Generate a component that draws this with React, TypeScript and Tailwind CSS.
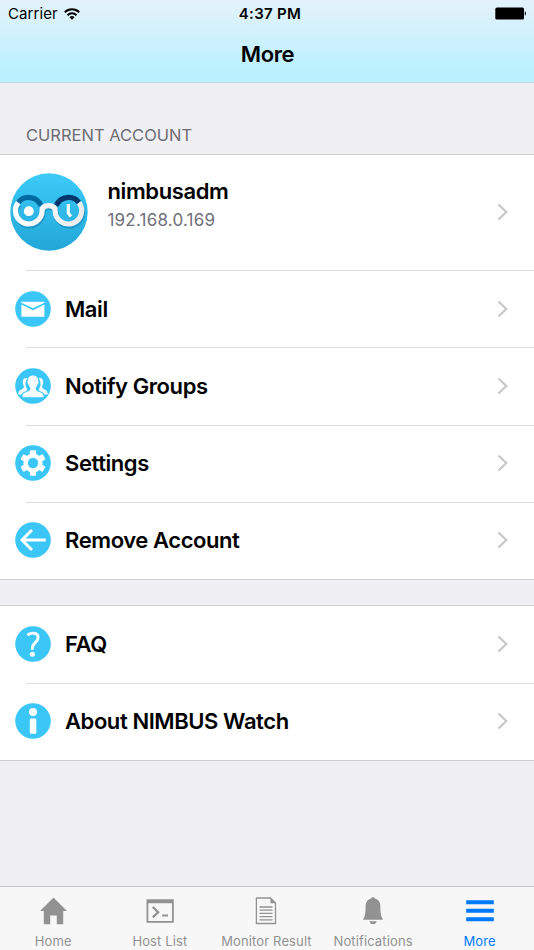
import React from "react";

const ACCENT = "#3ac7f7";

function Chevron() {
  return (
    <svg className="shrink-0" width="12" height="18" viewBox="0 0 12 18" fill="none">
      <path d="M1.5 1.5 9.3 9 1.5 16.5" stroke="#c7c7cc" strokeWidth="2.2" />
    </svg>
  );
}

function Disc({ children }: { children: React.ReactNode }) {
  return (
    <svg className="shrink-0" width="36" height="36" viewBox="0 0 36 36">
      <circle cx="18" cy="18" r="17.8" fill={ACCENT} />
      {children}
    </svg>
  );
}

function MailIcon() {
  return (
    <Disc>
      <path d="M6.4 10.8h23v1L18 17.3 6.4 11.8z" fill="#fff" />
      <path d="M6.4 13.4 18 19.3l11.4-5.9v12.3h-23z" fill="#fff" />
    </Disc>
  );
}

function GroupsIcon() {
  const side = "M12.4 10.1C9.2 9.5 7.5 11.6 7.8 14.8c.1 1.6.9 2.6 1.1 3.7.2 1.4-.8 2.1-3.1 3.3-1.7.9-2.5 2.2-2.5 4.6h3.4c.9-1.9 2.3-2.4 4.5-3.4 1.2-.6 1.4-1.3.6-2.5-1.1-1.6-1.5-3.4-1.2-5.7.2-1.8.8-3.3 1.8-4.7z";
  return (
    <Disc>
      <g fill="#f8fbfd">
        <path d={side} />
        <path d={side} transform="matrix(-1 0 0 1 36 0)" />
        <path d="M18 7.4c-3.4 0-5.2 2.2-5.1 5.5-.6.3-.6 1.1-.4 1.9.2.9.6 1.4 1.1 1.6.3 1.4.9 2.3 1.6 3v2c-.4 1.3-3 2.1-5.1 3.1-1.9.9-2.5 2.1-2.8 4.8h21.4c-.3-2.7-.9-3.9-2.8-4.8-2.1-1-4.7-1.8-5.1-3.1v-2c.7-.7 1.3-1.6 1.6-3 .5-.2.9-.7 1.1-1.6.2-.8.2-1.6-.4-1.9.1-3.3-1.7-5.5-5.1-5.5z" />
      </g>
    </Disc>
  );
}

function SettingsIcon() {
  return (
    <Disc>
      <g fill="#fff">
        {[0, 60, 120].map((deg) => (
          <rect key={deg} x="14.9" y="5.3" width="6.2" height="25.4" rx=".9" transform={`rotate(${deg} 18 18)`} />
        ))}
        <circle cx="18" cy="18" r="9.6" />
      </g>
      <circle cx="18" cy="18" r="5.2" fill={ACCENT} />
    </Disc>
  );
}

function RemoveIcon() {
  return (
    <Disc>
      <path d="M17 8 7 18l10 10M7.4 18h23.4" fill="none" stroke="#fff" strokeWidth="2.9" />
    </Disc>
  );
}

function FaqIcon() {
  return (
    <Disc>
      <path
        d="M12.5 9.1c1.5-1.3 3.2-2 5.3-2 3.4 0 5.3 1.7 5.3 4.5 0 2.4-1.5 3.8-3.1 5.3-1.7 1.6-2.7 2.8-2.7 5.5v1.3"
        fill="none"
        stroke="#fff"
        strokeWidth="2.9"
      />
      <circle cx="17.3" cy="28.3" r="2.5" fill="#fff" />
    </Disc>
  );
}

function AboutIcon() {
  return (
    <Disc>
      <circle cx="18" cy="9" r="4" fill="#fff" />
      <rect x="14.8" y="15.5" width="6.5" height="15.3" rx="1.2" fill="#fff" />
    </Disc>
  );
}

function NimbusLogo() {
  // Glasses: one lens holds a pupil, the other a clock
  const frame = "M8.2 29.6A13.3 13.3 0 1 0 32.1 38C32.1 34.2 34.5 32.6 38.6 32.6S45.1 34.2 45.1 38A13.3 13.3 0 1 0 69 29.6";
  return (
    <svg className="shrink-0" width="78" height="78" viewBox="0 0 78 78" fill="none">
      <defs>
        <linearGradient id="sky" x1="0" y1="0" x2="0" y2="1">
          <stop offset="0" stopColor="#3dcbf8" />
          <stop offset="1" stopColor="#21a7d8" />
        </linearGradient>
        <linearGradient id="rim" x1="0" y1="0" x2="1" y2="0">
          <stop offset="0" stopColor="#ffffff" />
          <stop offset="1" stopColor="#e9ebee" />
        </linearGradient>
      </defs>
      <circle cx="39" cy="39" r="38.7" fill="url(#sky)" />
      <path d={frame} stroke="#137fae" strokeOpacity=".55" strokeWidth="5.2" transform="translate(.8 2)" />
      <path d="M8.2 29.6A13.3 13.3 0 0 1 31 32.8" stroke="#0069a0" strokeWidth="5.2" />
      <path d="M46.2 32.8A13.3 13.3 0 0 1 69 29.6" stroke="#03366c" strokeWidth="5.2" />
      <path d={frame} stroke="url(#rim)" strokeWidth="5.2" />
      <circle cx="18.8" cy="38.2" r="4.9" fill="#fff" />
      <path d="M58.3 31v9l2.6 3.6" stroke="#f4fafd" strokeWidth="3.2" />
    </svg>
  );
}

function Row({ icon, label }: { icon: React.ReactNode; label: string }) {
  return (
    <div className="flex h-[77.25px] items-center pl-[14.5px]">
      {icon}
      <div className="ml-[14.5px] flex-1 text-[22px] leading-7 font-semibold tracking-[-0.42px]">{label}</div>
      <div className="mr-[25px] flex">
        <Chevron />
      </div>
    </div>
  );
}

function Divider() {
  return <div className="-mb-px ml-[26px] h-px bg-[#dfdfe2]" />;
}

function Tab({ label, active, children }: { label: string; active?: boolean; children: React.ReactNode }) {
  return (
    <div className={`flex flex-1 flex-col items-center ${active ? "text-[#007aff]" : "text-[#929292]"}`}>
      <svg className="mt-[8.5px]" width="32" height="32" viewBox="0 0 32 32" fill="currentColor">
        {children}
      </svg>
      <span className="mt-1 text-[13px] leading-[18px] tracking-[0.13px] whitespace-nowrap">{label}</span>
    </div>
  );
}

export default function App() {
  return (
    <div className="flex h-[950px] w-[534px] flex-col overflow-hidden bg-[#efeff4] font-['Inter',sans-serif] text-black">
      {/* Status bar + title */}
      <header className="h-[83px] shrink-0 border-b border-[#b9dbe3] bg-linear-to-b from-[#e4f2fa] to-[#bbf1ff] to-85%">
        <div className="grid h-7 grid-cols-3 items-center pr-[7px] pl-2 text-[15px]">
          <div className="flex items-center gap-[6px]">
            <span className="tracking-[0.1px]">Carrier</span>
            <svg width="16" height="12" viewBox="0 0 16 12" fill="none" stroke="#000" strokeWidth="2">
              <path d="M.8 4.3a10.2 10.2 0 0 1 14.4 0M3.5 7.2a6.4 6.4 0 0 1 9 0" />
              <path d="M8 11.7 5.5 9.2a3.6 3.6 0 0 1 5 0z" fill="#000" stroke="none" />
            </svg>
          </div>
          <div className="pl-[5px] text-center font-semibold tracking-[0.3px] whitespace-nowrap">4:37 PM</div>
          <div className="flex justify-end">
            <svg className="-mt-px" width="32" height="13" viewBox="0 0 32 13">
              <rect x=".3" y=".5" width="28.7" height="12" rx="1.5" fill="#000" />
              <path d="M29.8 4.3c1.6.5 1.6 3.9 0 4.4z" fill="#000" />
            </svg>
          </div>
        </div>
        <h1 className="mt-3 pl-px text-center text-[22px] leading-[29px] font-semibold tracking-[-0.4px]">More</h1>
      </header>

      <main className="flex-1">
        <h2 className="flex h-[71px] items-end pb-2 pl-[26px] text-[16.5px] leading-[22px] text-[#6d6d72]">CURRENT ACCOUNT</h2>

        <section className="border-y border-[#d0d0d4] bg-white">
          <div className="flex h-[115px] items-center pb-[2px] pl-[10px]">
            <NimbusLogo />
            <div className="mb-[14px] ml-[19.5px] flex-1">
              <div className="text-[22px] leading-7 font-semibold tracking-[-0.4px]">nimbusadm</div>
              <div className="mt-[2.5px] text-[17px] leading-6 tracking-[0.2px] text-[#6f6f79]">192.168.0.169</div>
            </div>
            <div className="mr-[25px] flex">
              <Chevron />
            </div>
          </div>
          <Divider />
          <Row icon={<MailIcon />} label="Mail" />
          <Divider />
          <Row icon={<GroupsIcon />} label="Notify Groups" />
          <Divider />
          <Row icon={<SettingsIcon />} label="Settings" />
          <Divider />
          <Row icon={<RemoveIcon />} label="Remove Account" />
        </section>

        <section className="mt-[25px] border-y border-[#d0d0d4] bg-white">
          <div className="-mt-[0.5px]">
            <Row icon={<FaqIcon />} label="FAQ" />
          </div>
          <Divider />
          <div className="-mb-[0.5px]">
            <Row icon={<AboutIcon />} label="About NIMBUS Watch" />
          </div>
        </section>
      </main>

      {/* Tab bar */}
      <nav className="flex h-16 shrink-0 border-t border-[#c6c6ca] bg-[#f7f7f7] pr-px">
        <Tab label="Home">
          <path d="M16.5 1.5 30 15h-3.8v13.3h-6.4v-8.8h-6.6v8.8H6.8V15H3z" />
        </Tab>
        <Tab label="Host List">
          <path fillRule="evenodd" d="M2.5 3.2h27.3v23.6H2.5zM4.3 7.3v17.8H28V7.3z" />
          <path d="m8.8 11 5.3 5.2-5.3 5.2" fill="none" stroke="currentColor" strokeWidth="2.3" />
          <path d="M18.2 18.5h5.8v2h-5.800z" />
        </Tab>
        <Tab label="Monitor Result">
          <path d="M6.4 2h14.1l5 5.2v20.3H6.4z" fill="none" stroke="currentColor" strokeWidth="1.3" />
          <path d="M20.5 1.5 26 7.3h-5.5z" />
          <path d="M9.5 11h13M9.5 14.2h13M9.5 17.4h13M9.5 20.6h13M9.5 23.8h13" stroke="currentColor" strokeWidth="1.3" />
        </Tab>
        <Tab label="Notifications">
          <path d="M16 1.3c1.2 0 1.6.5 1.8 1.2 3.8 1 5.6 4 5.6 7.8 0 6.8.6 10.5 2.4 12.7v.8H6.200V23c1.8-2.2 2.4-5.9 2.4-12.7 0-3.8 1.8-6.8 5.6-7.8.2-.7.6-1.2 1.8-1.2z" />
          <path d="M12.4 25.3h7.2c-.4 2-1.7 3-3.6 3s-3.200-1-3.600-3z" />
        </Tab>
        <Tab label="More" active>
          <path d="M2.2 4.3h27.6v4H2.2zM2.2 12.8h27.6v4H2.2zM2.2 21.3h27.6v4H2.2z" />
        </Tab>
      </nav>
    </div>
  );
}
